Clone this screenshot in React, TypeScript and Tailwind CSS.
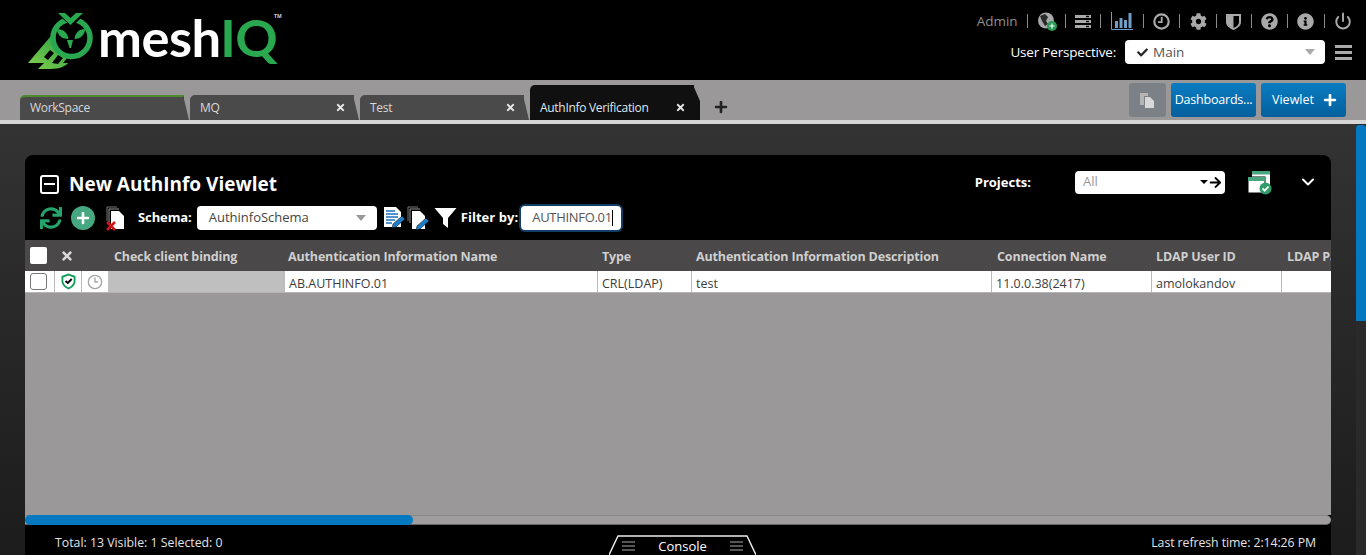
import React from "react";
import { ChevronDown, Power, Clock3 } from "lucide-react";
import { FaCheck, FaTimes, FaPlus, FaCog, FaQuestionCircle, FaInfoCircle, FaArrowRight, FaSync } from "react-icons/fa";

const Logo = () => (
  <div className="flex items-start w-[270px] h-[66px] ml-[27px] mt-[11px] relative">
    <svg width="70" height="60" viewBox="27 11 70 60" className="shrink-0">
      <defs>
        <linearGradient id="lg" x1="0" y1="1" x2="1" y2="0">
          <stop offset="0" stopColor="#86d04c" />
          <stop offset="1" stopColor="#1f9a45" />
        </linearGradient>
      </defs>
      <path d="M28 63 L51 36 C52 48 58 56 72 58 C68 66 60 69 50 69 L38 69 L44 63 Z" fill="url(#lg)" />
      <path d="M44 57 L50 50 L54 53 L48 60 Z M52 63 L58 55 L63 58 L58 64 Z M63 63 L67 58 L72 60 L69 63 Z" fill="#000" />
      <circle cx="71.5" cy="38" r="18.5" fill="#000" stroke="#2aa84f" strokeWidth="5.5" />
      <path d="M54 11 H88 L72 27 Z" fill="#000" />
      <path d="M58 13 H65 L70.5 18 L76 13 H83 L70.5 25 Z" fill="#2aa84f" />
      <path d="M57 29 C63 29 68 33 68.5 39 C62 39 57 35 57 29 Z" fill="#2aa84f" />
      <path d="M85 29 C79 29 75 33 74.5 39 C80 39 85 35 85 29 Z" fill="#2aa84f" />
      <path d="M67 40 H73 L71 48 H69.5 Z" fill="#2aa84f" />
    </svg>
    <div className="font-['Lato',sans-serif] text-[52.5px] leading-[60px] font-bold tracking-[-0.5px] text-white ml-[1px] mt-[-4px] whitespace-nowrap">
      mesh<span className="text-[#2aa84f]">IQ</span>
    </div>
    <span className="absolute left-[247px] top-[2px] text-[5px] leading-[6px] text-gray-300 font-bold">TM</span>
  </div>
);

const Sep = () => <div className="w-px h-[14px] bg-[#8a8a8a]" />;

const TopIcons = () => (
  <div className="flex items-center h-[20px] gap-[9.3px] text-[#a9a9a9] -mt-[1px]">
    <span className="text-[13.5px] text-[#8f8f8f]">Admin</span>
    <Sep />
    <div className="relative w-[18px] h-[18px]">
      <svg width="18" height="18" viewBox="0 0 18 18">
        <circle cx="9" cy="8.5" r="8" fill="#a9a9a9" />
        <path d="M3 4 L8 2 L11 5 L9 9 L11 12 L8 14 L5 9 Z" fill="#000" opacity="0.75" />
      </svg>
      <span className="absolute left-[10px] top-[9px] w-[10px] h-[10px] rounded-full bg-[#2c9a57] flex items-center justify-center">
        <FaPlus className="text-white" size={6} />
      </span>
    </div>
    <Sep />
    <svg width="16" height="13" viewBox="0 0 16 13">
      <rect x="0" y="0" width="16" height="3" fill="#a9a9a9" />
      <rect x="0" y="5" width="16" height="3" fill="#a9a9a9" />
      <rect x="0" y="10" width="16" height="3" fill="#a9a9a9" />
      <rect x="11" y="0.8" width="3" height="1.4" fill="#000" />
      <rect x="11" y="5.8" width="3" height="1.4" fill="#000" />
      <rect x="11" y="10.8" width="3" height="1.4" fill="#000" />
    </svg>
    <Sep />
    <svg width="22" height="18" viewBox="0 0 22 18" className="ml-[1px]">
      <path d="M0.5 0 V17.5 H22" stroke="#6f9fc6" strokeWidth="1" fill="none" />
      <rect x="4" y="9" width="3" height="7" fill="#6f9fc6" />
      <rect x="8.5" y="6" width="3" height="10" fill="#6f9fc6" />
      <rect x="13" y="8" width="3" height="8" fill="#6f9fc6" />
      <rect x="17.5" y="1" width="3" height="15" fill="#6f9fc6" />
    </svg>
    <Sep />
    <svg width="17" height="17" viewBox="0 0 17 17">
      <circle cx="8.5" cy="8.5" r="7.2" stroke="#a9a9a9" strokeWidth="2.2" fill="none" />
      <path d="M8.7 4 V9.2 H5" stroke="#a9a9a9" strokeWidth="1.8" fill="none" />
    </svg>
    <Sep />
    <FaCog size={17} />
    <Sep />
    <svg width="15" height="17" viewBox="0 0 15 17">
      <path d="M0 1 H15 V9 C15 13 11 15.5 7.5 17 C4 15.5 0 13 0 9 Z" fill="#a9a9a9" />
      <path d="M7.5 3 H13 V9 C13 12 10 14 7.5 15 Z" fill="#000" />
    </svg>
    <Sep />
    <FaQuestionCircle size={17} />
    <Sep />
    <FaInfoCircle size={17} />
    <Sep />
    <Power size={18} strokeWidth={2.6} />
  </div>
);

const Tab = ({ label, active, first, close = true }: { label: string; active?: boolean; first?: boolean; close?: boolean }) => (
  <div
    className={
      "relative w-[164px] flex items-end pl-[10px] pr-[14px] pb-[4px] text-[12px] tracking-[-0.3px] rounded-tl-[5px] " +
      (active ? "h-[35px] bg-[#101010] text-[#dfe8ee]" : "h-[25px] bg-[#4a4a4a] text-[#d8d8d8] ") +
      (first ? "border-t-[2px] border-[#4f8a2e]" : "")
    }
  >
    <span className="flex-1 leading-[16px]">{label}</span>
    {close && <FaTimes className="text-[#e4e4e4] mb-[3px] mr-[-6px]" size={11} />}
    <svg
      width="7"
      viewBox="0 0 7 35"
      className={"absolute right-[-6px] " + (first ? "top-[-2px]" : "top-0")}
      style={{ height: active ? 35 : 25 }}
      preserveAspectRatio="none"
    >
      <path d={active ? "M0 0 L7 16 V35 H0 Z" : "M0 0 L6 35 H0 Z"} fill={active ? "#101010" : "#4a4a4a"} />
    </svg>
  </div>
);

const cols: [string, number][] = [
  ["Check client binding", 174],
  ["Authentication Information Name", 314],
  ["Type", 94],
  ["Authentication Information Description", 301],
  ["Connection Name", 159],
  ["LDAP User ID", 131],
  ["LDAP Password", 120],
];
const rowCells: [string, number][] = [
  ["AB.AUTHINFO.01", 313],
  ["CRL(LDAP)", 94],
  ["test", 300],
  ["11.0.0.38(2417)", 160],
  ["amolokandov", 130],
  ["", 120],
];

const PageIcon = ({ fill = "#fff" }: { fill?: string }) => (
  <>
    <path d="M1 1 H11 M1 1 V15" stroke="#777" strokeWidth="1" fill="none" />
    <path d="M3 3 H13 M3 3 V17" stroke="#999" strokeWidth="1" fill="none" />
    <path d="M5 5 H13 L18 10 V23 H5 Z" fill={fill} />
  </>
);

const Lines = () => (
  <span className="flex flex-col gap-[2px] w-[13px]">
    <i className="h-[2px] bg-[#555]" />
    <i className="h-[2px] bg-[#555]" />
    <i className="h-[2px] bg-[#555]" />
  </span>
);

export default function App() {
  return (
    <div className="w-[1366px] h-[555px] overflow-hidden bg-black font-['Open_Sans',sans-serif] flex flex-col">
      <header className="h-[80px] shrink-0 bg-black flex justify-between">
        <Logo />
        <div className="flex flex-col items-end pr-[14px] pt-[12px]">
          <TopIcons />
          <div className="flex items-center mt-[9px] h-[24px]">
            <span className="text-[13.5px] text-white tracking-[-0.2px] mr-[9px]">User Perspective:</span>
            <div className="w-[200px] h-[24px] bg-white rounded-[4px] flex items-center pl-[12px] pr-[10px] text-[#555]">
              <FaCheck size={11} className="text-[#222]" />
              <span className="ml-[5px] text-[13.5px] flex-1">Main</span>
              <span className="w-0 h-0 border-x-[5px] border-x-transparent border-t-[6px] border-t-[#aaa]" />
            </div>
            <div className="ml-[10px] w-[17px] flex flex-col gap-[3px]">
              <span className="h-[3px] bg-[#a9a9a9]" />
              <span className="h-[3px] bg-[#a9a9a9]" />
              <span className="h-[3px] bg-[#a9a9a9]" />
            </div>
          </div>
        </div>
      </header>

      <nav className="h-[40px] shrink-0 bg-[#9a9898] flex items-end justify-between pl-[20px] pr-[20px]">
        <div className="flex items-end">
          <Tab label="WorkSpace" first close={false} />
          <div className="w-[6px]" />
          <Tab label="MQ" />
          <div className="w-[6px]" />
          <Tab label="Test" />
          <div className="w-[6px]" />
          <Tab label="AuthInfo Verification" active />
          <FaPlus className="ml-[20px] mb-[6px] text-[#222]" size={14} />
        </div>
        <div className="flex items-center gap-[5px] self-start mt-[3px]">
          <div className="w-[37px] h-[34px] rounded-[3px] bg-[#7c8087] flex items-center justify-center">
            <svg width="15" height="15" viewBox="0 0 15 15">
              <path d="M0 0 H8 V3 H4 V12 H0 Z" fill="#b5b5b5" />
              <path d="M5 4 H10 L14 8 V15 H5 Z" fill="#d8d8d8" />
            </svg>
          </div>
          <div className="w-[85px] h-[34px] rounded-[3px] bg-gradient-to-b from-[#0a7cc2] to-[#05609d] text-white text-[12.5px] tracking-[-0.2px] flex items-center justify-center whitespace-nowrap">
            Dashboards...
          </div>
          <div className="w-[85px] h-[34px] rounded-[3px] bg-gradient-to-b from-[#0a7cc2] to-[#05609d] text-white text-[12.5px] flex items-center pl-[11px] gap-[9px]">
            Viewlet <FaPlus size={14} />
          </div>
        </div>
      </nav>
      <div className="h-[4px] shrink-0 bg-[#d6d6d6]" />

      <main className="flex-1 min-h-0 flex bg-gradient-to-b from-[#333333] to-[#1c1c1c]">
        <div className="flex-1 min-w-0 pl-[25px] pr-[25px] pt-[31px]">
          <section className="h-[400px] w-[1306px] bg-black rounded-t-[8px] flex flex-col overflow-hidden">
            <div className="h-[85px] shrink-0 relative">
              <div className="flex items-center pl-[15px] pt-[14px] h-[44px]">
                <span className="w-[19px] h-[19px] border-2 border-white rounded-[3px] flex items-center justify-center">
                  <span className="w-[11px] h-[2px] bg-white" />
                </span>
                <span className="ml-[10px] text-white font-bold text-[19px]">New AuthInfo Viewlet</span>
              </div>
              <div className="flex items-center pl-[15px] h-[26px] mt-[6px]">
                <FaSync size={22} className="text-[#25a56b]" />
                <span className="ml-[9px] w-[24px] h-[24px] rounded-full bg-[#46a880] flex items-center justify-center">
                  <FaPlus size={14} className="text-white" />
                </span>
                <svg width="22" height="25" viewBox="0 0 20 25" className="ml-[10px]">
                  <PageIcon />
                  <path d="M1 16 L9 24 M9 16 L1 24" stroke="#d0141a" strokeWidth="2.6" />
                </svg>
                <span className="ml-[11px] text-white font-bold text-[13px] tracking-[-0.1px]">Schema:</span>
                <div className="ml-[5px] w-[180px] h-[24px] bg-white rounded-[4px] flex items-center pl-[12px] pr-[11px] text-[13px] text-[#444]">
                  <span className="flex-1">AuthinfoSchema</span>
                  <span className="w-0 h-0 border-x-[5px] border-x-transparent border-t-[6px] border-t-[#999]" />
                </div>
                <svg width="24" height="25" viewBox="0 0 24 25" className="ml-[6px]">
                  <path d="M1 1 H13 L18 6 V21 H1 Z" fill="#fff" />
                  <path d="M3 5 H12 M3 8 H15 M3 11 H15 M3 14 H12 M3 17 H9" stroke="#1a6fc0" strokeWidth="1.5" />
                  <path d="M9 22 L10 18 L19 10 L22 13 L13 21 Z" fill="#1f7cc8" stroke="#000" strokeWidth="0.5" />
                </svg>
                <svg width="24" height="25" viewBox="0 0 24 25">
                  <PageIcon />
                  <path d="M9 24 L10 20 L19 12 L22 15 L13 23 Z" fill="#1f7cc8" stroke="#000" strokeWidth="0.5" />
                </svg>
                <svg width="23" height="22" viewBox="0 0 22 22" className="ml-[3px]">
                  <path d="M0 1 H22 L13.5 11 V21 L8.5 17 V11 Z" fill="#fff" />
                </svg>
                <span className="ml-[4px] text-white font-bold text-[13px] tracking-[0.05px]">Filter by:</span>
                <div className="ml-[3px] w-[100px] h-[24px] bg-white rounded-[4px] ring-[2px] ring-[#123d66] flex items-center pl-[11px] text-[13px] tracking-[-0.3px] text-[#555]">
                  AUTHINFO.01
                  <span className="w-px h-[16px] bg-black" />
                </div>
              </div>
              <div className="absolute right-0 top-[15px] flex items-center h-[24px]">
                <span className="text-white font-bold text-[13px] pt-[1px]">Projects:</span>
                <div className="ml-[44px] w-[150px] h-[23px] bg-white rounded-[4px] flex items-center pl-[8px] pr-[3px] text-[13px] text-[#999]">
                  <span className="flex-1">All</span>
                  <span className="w-0 h-0 border-x-[4px] border-x-transparent border-t-[4px] border-t-black mr-[1px]" />
                  <FaArrowRight size={13} className="text-black" />
                </div>
                <svg width="25" height="25" viewBox="0 0 25 25" className="ml-[22px]">
                  <rect x="5" y="1" width="18" height="16" fill="#fff" />
                  <rect x="5" y="1" width="18" height="3.5" fill="#47a77e" />
                  <rect x="1" y="7" width="17" height="16" fill="#fff" stroke="#000" strokeWidth="1" />
                  <rect x="1" y="7" width="17" height="4" fill="#47a77e" />
                  <circle cx="18.5" cy="18.5" r="6" fill="#2f9d6b" />
                  <path d="M15.5 18.5 L17.7 20.7 L21.5 16.5" stroke="#fff" strokeWidth="1.8" fill="none" />
                </svg>
                <ChevronDown size={20} strokeWidth={2.4} className="text-white ml-[26px] mr-[13px]" />
              </div>
            </div>

            <div className="h-[31px] shrink-0 bg-[#4a4848] flex items-center overflow-hidden">
              <div className="w-[31px] shrink-0 pl-[5px]">
                <span className="block w-[17px] h-[17px] bg-white rounded-[2px]" />
              </div>
              <div className="w-[52px] shrink-0 pl-[4px]">
                <FaTimes size={14} className="text-[#d8d8d8]" />
              </div>
              {cols.map(([c, w]) => (
                <div key={c} style={{ width: w }} className="shrink-0 pl-[6px] pt-[3px] text-[12.5px] font-bold tracking-[-0.15px] text-[#cfcfcf] whitespace-nowrap">
                  {c}
                </div>
              ))}
            </div>

            <div className="h-[22px] shrink-0 bg-white flex items-stretch overflow-hidden border-b border-[#b5b5b5]">
              <div className="w-[30px] shrink-0 border-r border-[#bbb] flex items-center pl-[5px]">
                <span className="block w-[17px] h-[17px] bg-white rounded-[3px] border border-[#777]" />
              </div>
              <div className="w-[27px] shrink-0 border-r border-[#bbb] flex items-center justify-center">
                <svg width="15" height="17" viewBox="0 0 15 17">
                  <path d="M7.5 0.5 L14.5 3 V8 C14.5 12 11 15 7.5 16.5 C4 15 0.5 12 0.5 8 V3 Z" fill="#0f9d58" />
                  <path d="M7.5 2.6 L12.7 4.4 V8 C12.7 11 10 13.3 7.5 14.5 C5 13.3 2.3 11 2.3 8 V4.4 Z" fill="#fff" />
                  <path d="M4.5 8 L6.8 10 L10.7 6" stroke="#000" strokeWidth="1.9" fill="none" />
                </svg>
              </div>
              <div className="w-[26px] shrink-0 flex items-center justify-center pr-[1px]">
                <Clock3 size={16} strokeWidth={2} className="text-[#a5a5a5]" />
              </div>
              <div className="w-[176px] shrink-0 bg-[#bfbfbf]" />
              {rowCells.map(([v, w], i) => (
                <div key={i} style={{ width: w }} className="shrink-0 pl-[4px] first:pl-[3px] pt-[5px] border-l border-[#bbb] first:border-l-0 text-[12.5px] text-[#3d3d3d] flex items-center whitespace-nowrap">
                  {v}
                </div>
              ))}
            </div>

            <div className="flex-1 min-h-0 bg-[#9a9898]" />

            <div className="h-[10px] shrink-0 bg-[#9f9d9d] border-t border-[#888] border-b border-b-[#666] rounded-r-[5px] relative">
              <div className="absolute left-0 top-[-1px] w-[388px] h-[10px] bg-[#0479bf] rounded-full" />
            </div>

            <footer className="h-[30px] shrink-0 bg-black flex items-center justify-between pl-[30px] pr-[15px] pt-[7px] text-[12.3px] text-[#e3e3e3] relative">
              <span>Total: 13 Visible: 1 Selected: 0</span>
              <span className="tracking-[-0.07px]">Last refresh time: 2:14:26 PM</span>
              <div className="absolute left-[584px] top-[10px] w-[147px] h-[20px]">
                <svg width="147" height="20" viewBox="0 0 147 20" className="absolute inset-0">
                  <path d="M0 20 L9 1 H138 L147 20" stroke="#eee" strokeWidth="1.4" fill="none" />
                </svg>
                <div className="relative flex items-center justify-between px-[13px] pt-[3px] text-white text-[13px] leading-[16px]">
                  <Lines />
                  <span>Console</span>
                  <Lines />
                </div>
              </div>
            </footer>
          </section>
        </div>
        <div className="w-[10px] shrink-0 bg-[#2a2a2a] pt-[1px]">
          <div className="h-[196px] bg-[#0479bf] rounded-t-[3px]" />
        </div>
      </main>
    </div>
  );
}
